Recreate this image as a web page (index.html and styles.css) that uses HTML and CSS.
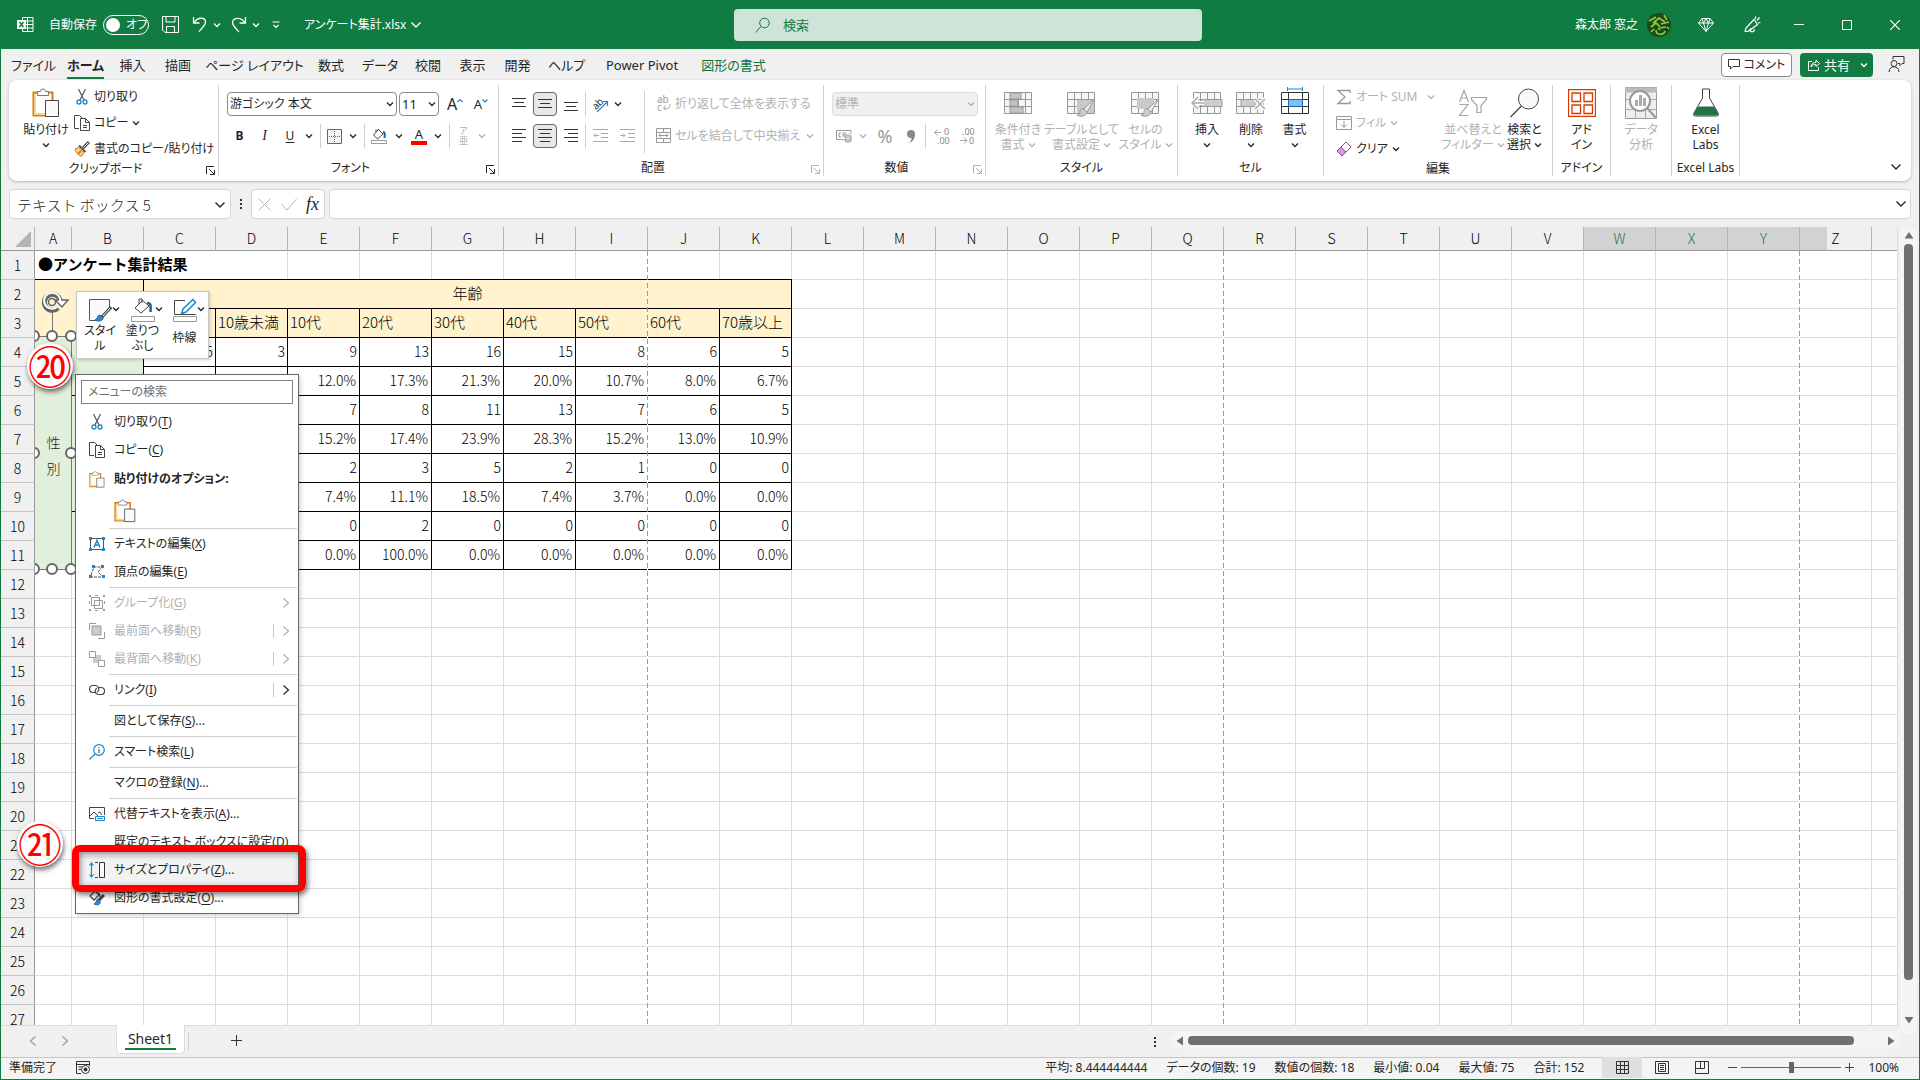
FILE: index.html
```html
<!DOCTYPE html>
<html lang="ja">
<head>
<meta charset="utf-8">
<title>アンケート集計.xlsx</title>
<link rel="stylesheet" href="styles.css">
</head>
<body>
<svg class="defs" aria-hidden="true">
  <symbol id="chev" viewBox="0 0 8 8"><path d="M1 2.5 4 5.5 7 2.5" fill="none" stroke="currentColor" stroke-width="1.3"/></symbol>
  <symbol id="chev-l" viewBox="0 0 12 12"><path d="M1.500 3.500 6 8 10.500 3.500" fill="none" stroke="currentColor" stroke-width="1.4"/></symbol>
  <symbol id="right" viewBox="0 0 8 12"><path d="M1.500 1.500 6.500 6 1.500 10.500" fill="none" stroke="currentColor" stroke-width="1.2"/></symbol>
  <symbol id="launch" viewBox="0 0 9 9"><path d="M.5 8V.5H8M3 3l5 5M8.500 4v4.500H4" fill="none" stroke="currentColor"/></symbol>
  <symbol id="cut" viewBox="0 0 16 16"><path d="M4.500 0 10 11M11.500 0 6 11" fill="none" stroke="#555" stroke-width="1.2"/><circle cx="5" cy="13" r="2" fill="none" stroke="#1b87cd" stroke-width="1.300"/><circle cx="11" cy="13" r="2" fill="none" stroke="#1b87cd" stroke-width="1.300"/></symbol>
  <symbol id="copy" viewBox="0 0 16 16"><path d="M5 13.500H.5V.5h5L8 3M6.500 3.500h5l4 4v8h-9zM11.500 3.500v4h4M9 10.500h4M9 12.500h4" fill="none" stroke="#444"/></symbol>
  <symbol id="paste" viewBox="0 0 28 30"><path d="M1.500 4.500h19V27.500h-19z" fill="#fff" stroke="#e07a10" stroke-width="2"/><path d="M3 6v20h10" fill="none" stroke="#f8d48a" stroke-width="2"/><path d="M5.500 7.500v-4h3a2.500 2.500 0 0 1 5 0h3v4z" fill="#fff" stroke="#777"/><path d="M13.500 12.500h13v16h-13z" fill="#fafafa" stroke="#444"/></symbol>
  <symbol id="sheetgrid" viewBox="0 0 28 22"><path d="M.5.5h27v21H.5z" fill="#f7f7f7" stroke="currentColor"/><path d="M0 7.500h28M0 14.500h28M7.500 0v22M14.500 0v22M21.500 0v22" fill="none" stroke="currentColor"/></symbol>
  <symbol id="brush" viewBox="0 0 20 20"><path d="M19 1 8 12l3 3z" fill="#eee" stroke="currentColor"/><path d="M8 12c-3-1-4 1-4 3s-1 3-3 3c3 2 9 2 10-3z" fill="#ccc" stroke="currentColor"/></symbol>
</svg>
<div class="app">

<header class="titlebar">
  <div class="title-left">
    <svg class="excel" width="17" height="17" viewBox="0 0 17 17"><path d="M5.500 1.500h10.500v14H5.500zM5 5h11M5 8.500h11M5 12h11M10.500 1.500v14" fill="none" stroke="#fff"/><path d="M0 4h9v9H0z" fill="#fff"/><path d="m2.500 6 4 5m0-5-4 5" stroke="#107c41" stroke-width="1.500"/></svg>
    <span>自動保存</span>
    <button class="toggle" aria-label="自動保存"><i></i>オフ</button>
    <button class="save" aria-label="保存"><svg width="17" height="17" viewBox="0 0 17 17"><path d="M.5.5h16v16H3l-2.500-2.500zM4 .5v5.500h9V.5M4.500 16.500v-6h8v6" fill="none" stroke="#fff"/></svg></button>
    <button aria-label="元に戻す"><svg width="16" height="17" viewBox="0 0 16 17"><path d="M1.500 1v6h6M2 6.500C6 1 13 1 13.500 5.500c.5 3-3 6-6.500 10" fill="none" stroke="#fff" stroke-width="1.300"/></svg></button>
    <button class="tchev" aria-label="元に戻す一覧"><svg width="8" height="8"><use href="#chev"/></svg></button>
    <button aria-label="やり直し"><svg width="16" height="17" viewBox="0 0 16 17"><path d="M14.500 1v6h-6M14 6.500C10 1 3 1 1.500 6c-.5 3 3 6 6.500 10" fill="none" stroke="#fff" stroke-width="1.300"/></svg></button>
    <button class="tchev" aria-label="やり直し一覧"><svg width="8" height="8"><use href="#chev"/></svg></button>
    <button class="custom" aria-label="クイック アクセス"><svg width="8" height="8" viewBox="0 0 8 8"><path d="M.5 1h7M1.500 4 4 6.500 6.500 4" fill="none" stroke="#fff" stroke-width="1.200"/></svg></button>
    <button class="filename">アンケート集計.xlsx <svg width="12" height="12"><use href="#chev-l"/></svg></button>
  </div>
  <label class="search"><svg width="16" height="16" viewBox="0 0 16 16"><circle cx="9.500" cy="6" r="4.800" fill="none" stroke="#107c41"/><path d="m6 9.500-5.500 6" stroke="#107c41"/></svg><input type="text" placeholder="検索" aria-label="検索"></label>
  <div class="title-right">
    <span>森太郎 窓之</span>
    <svg class="avatar" width="24" height="24" viewBox="0 0 24 24"><circle cx="12" cy="12" r="12" fill="#1c4a17"/><path d="M2 8 9 4M6 10l6-5 6 4M17 2l3 5M4 14l5-4 4 4M14 11l8-2M13 15l6-1M4 19l3-3M9 17c0 6 8 5 9 1M11 15l2 2M20 14l2 2" stroke="#8ccb3c" stroke-width="1.700" fill="none"/></svg>
    <button aria-label="プレミアム"><svg width="16" height="16" viewBox="0 0 16 16"><path d="M4 1.500h8l3.500 4.500L8 14.500.5 6zM.5 6h15M4 1.500 5.500 6 8 14.500 10.500 6 12 1.500M5.500 6 8 1.500 10.500 6" fill="none" stroke="#fff"/></svg></button>
    <button aria-label="新機能"><svg width="17" height="17" viewBox="0 0 17 17"><path d="M10 3.500 2 12l-.8 3.500L4 15.500 13.500 8.500zM7 12.500l-3 3M6 14c1 3 5 2 4-1M11 3l1-2.500M13 4.500l2.500-3M14 7l2.500-.5" fill="none" stroke="#fff" stroke-width="1.200"/></svg></button>
    <button aria-label="最小化"><svg width="10" height="10"><path d="M0 4.500h10" stroke="#fff"/></svg></button>
    <button aria-label="最大化"><svg width="10" height="10"><path d="M.5.5h9v9h-9z" fill="none" stroke="#fff"/></svg></button>
    <button aria-label="閉じる"><svg width="10" height="10"><path d="m0 0 10 10M10 0 0 10" stroke="#fff" stroke-width="1.200"/></svg></button>
  </div>
</header>

<div class="tabrow">
  <nav class="tabs">
    <a href="#">ファイル</a><a href="#" class="active">ホーム</a><a href="#">挿入</a><a href="#">描画</a><a href="#">ページ レイアウト</a><a href="#">数式</a><a href="#">データ</a><a href="#">校閲</a><a href="#">表示</a><a href="#">開発</a><a href="#">ヘルプ</a><a href="#">Power Pivot</a><a href="#" class="context">図形の書式</a>
  </nav>
  <button class="comment"><svg width="12" height="11" viewBox="0 0 12 11"><path d="M.5.5h11v7H5l-2.500 2.500V7.500h-2z" fill="none" stroke="#333"/></svg>コメント</button>
  <button class="share"><svg width="12" height="12" viewBox="0 0 12 12"><path d="M4 2.500H.5v9h10V8M3 8c0-3 2-4.500 5-4.500V1l3.500 3.500L8 7.500V5.500C5.500 5.500 4 6 3 8z" fill="none" stroke="#fff"/></svg>共有<svg class="end" width="8" height="8"><use href="#chev"/></svg></button>
  <button class="feedback" aria-label="フィードバック"><svg width="17" height="17" viewBox="0 0 17 17"><path d="M5 3.500V.5h11v7h-2l-2 2v-2h-2M1 16c0-7 10-7 10 0" fill="none" stroke="#333"/><circle cx="6" cy="7.500" r="3" fill="none" stroke="#333"/></svg></button>
</div>

<section class="ribbon">
  <div class="group g-clip">
    <div class="body">
      <button class="big w56"><span class="ico"><svg width="28" height="30"><use href="#paste"/></svg></span><span>貼り付け</span><svg width="8" height="8"><use href="#chev"/></svg></button>
      <div class="list">
        <button><svg width="16" height="16"><use href="#cut"/></svg>切り取り</button>
        <button><svg width="16" height="16"><use href="#copy"/></svg>コピー<svg width="8" height="8"><use href="#chev"/></svg></button>
        <button><svg width="16" height="16" viewBox="0 0 16 16"><path d="M15 1 9 7" stroke="#444" stroke-width="3"/><path d="M14.500 1.500 9.500 6.500" stroke="#fff"/><path d="M5 4.500 11.500 11" stroke="#555" stroke-width="2"/><path d="M4.500 6.500 1 8c1 4 3 6 6.500 7.500l2.500-4z" fill="#f8d48a" stroke="#e07a10"/><path d="M4 13 7 10" stroke="#e07a10" stroke-width="2"/></svg>書式のコピー/貼り付け</button>
      </div>
    </div>
    <div class="foot">クリップボード<svg width="9" height="9"><use href="#launch"/></svg></div>
  </div>

  <div class="group g-font">
    <div class="body rows">
      <div class="row">
        <div class="combo font"><input type="text" value="游ゴシック 本文" aria-label="フォント"><svg width="8" height="8"><use href="#chev"/></svg></div>
        <div class="combo size"><input type="text" value="11" aria-label="サイズ"><svg width="8" height="8"><use href="#chev"/></svg></div>
        <button class="ctl w28 grow" aria-label="拡大">A<svg width="6" height="6" viewBox="0 0 6 6"><path d="M.5 4 3 1.500 5.500 4" fill="none" stroke="#1b87cd" stroke-width="1.200"/></svg></button>
        <button class="ctl w24 shrink" aria-label="縮小">A<svg width="6" height="6" viewBox="0 0 6 6"><path d="M.5 1.500 3 4 5.500 1.500" fill="none" stroke="#1b87cd" stroke-width="1.200"/></svg></button>
      </div>
      <div class="row fmt">
        <button class="bold">B</button><button class="ital">I</button><button class="under">U</button><svg width="8" height="8"><use href="#chev"/></svg><i class="vs"></i>
        <button aria-label="罫線"><svg width="15" height="15" viewBox="0 0 15 15"><path d="M.5.500h14v14H.5z" fill="#f4f4f4" stroke="#666"/><path d="M7.500 2v11M2 7.500h11" stroke="#666" stroke-dasharray="1 1"/></svg></button><svg width="8" height="8"><use href="#chev"/></svg><i class="vs"></i>
        <button aria-label="塗りつぶし"><svg width="16" height="16" viewBox="0 0 16 16"><path d="M7 2 2.500 7l4 4L12 6 7 1zM5 4V1.500" fill="#fff" stroke="#444"/><path d="M12 4c2 0 2 2 1.500 6" stroke="#1b62a8" stroke-width="2" fill="none"/><path d="M.5 12.500h15v3H.5z" fill="#fff" stroke="#999"/></svg></button><svg width="8" height="8"><use href="#chev"/></svg>
        <button class="fcolor">A</button><svg width="8" height="8"><use href="#chev"/></svg><i class="vs"></i>
        <button class="ruby dis">ア<br>亜</button><svg class="dis" width="8" height="8"><use href="#chev"/></svg>
      </div>
    </div>
    <div class="foot">フォント<svg width="9" height="9"><use href="#launch"/></svg></div>
  </div>

  <div class="group g-align">
    <div class="body">
      <div class="rows">
        <div class="row al">
          <button aria-label="上揃え"><svg width="14" height="14"><path d="M0 1.500h14M2 5.500h10M0 9.500h14" stroke="#333"/></svg></button>
          <button class="on" aria-label="上下中央揃え"><svg width="14" height="14"><path d="M0 2.500h14M2 6.500h10M0 10.500h14" stroke="#333"/></svg></button>
          <button aria-label="下揃え"><svg width="14" height="14"><path d="M0 5.500h14M2 9.500h10M0 13.500h14" stroke="#333"/></svg></button><i class="vs"></i>
          <button aria-label="方向"><svg width="17" height="17" viewBox="0 0 17 17"><text x="0" y="11" transform="rotate(-45 6 8)" font-size="10" fill="#333">ab</text><path d="M5 16 15.500 5.500M11 5.500h4.500V10" fill="none" stroke="#1b87cd" stroke-width="1.200"/></svg></button>
          <svg width="8" height="8"><use href="#chev"/></svg>
        </div>
        <div class="row al">
          <button aria-label="左揃え"><svg width="14" height="14"><path d="M0 .5h14M0 4.500h10M0 8.500h14M0 12.500h10" stroke="#333"/></svg></button>
          <button class="on" aria-label="中央揃え"><svg width="14" height="14"><path d="M0 .5h14M2 4.500h10M0 8.500h14M2 12.500h10" stroke="#333"/></svg></button>
          <button aria-label="右揃え"><svg width="14" height="14"><path d="M0 .5h14M4 4.500h10M0 8.500h14M4 12.500h10" stroke="#333"/></svg></button><i class="vs"></i>
          <button class="dis" aria-label="インデント減"><svg width="15" height="14"><path d="M0 .5h15M8 4.500h7M8 8.500h7M0 12.500h15M1 6.500h5M3 4.500l-2 2 2 2" fill="none" stroke="#aaa"/></svg></button>
          <button class="dis" aria-label="インデント増"><svg width="15" height="14"><path d="M0 .5h15M8 4.500h7M8 8.500h7M0 12.500h15M0 6.500h5M3 4.500l2 2-2 2" fill="none" stroke="#aaa"/></svg></button>
        </div>
      </div>
      <i class="vs tall"></i>
      <div class="rows wrapcol">
        <button class="row dis"><svg width="16" height="16" viewBox="0 0 16 16"><text x="1" y="7" font-size="10" fill="#999">ab</text><text x="1" y="15" font-size="10" fill="#999">c</text><path d="M13.500 8c2 5-3 5-5.500 4M10 9.500 7.500 12 10 14.500" fill="none" stroke="#a5a5a5"/></svg>折り返して全体を表示する</button>
        <button class="row dis"><svg width="16" height="16" viewBox="0 0 16 16"><path d="M.5.5h14v14H.5zM0 4.500h15M0 10.500h15M7.500 0v4M7.500 11v4M3 7.500h9M5 5.500l-2 2 2 2M10 5.500l2 2-2 2" fill="none" stroke="#999"/></svg>セルを結合して中央揃え<svg width="8" height="8"><use href="#chev"/></svg></button>
      </div>
    </div>
    <div class="foot">配置<svg class="dis" width="9" height="9"><use href="#launch"/></svg></div>
  </div>

  <div class="group g-num">
    <div class="body rows">
      <div class="row"><div class="combo off"><input type="text" value="標準" aria-label="表示形式" disabled><svg width="8" height="8"><use href="#chev"/></svg></div></div>
      <div class="row num dis">
        <button aria-label="通貨"><svg width="16" height="14" viewBox="0 0 16 14"><path d="M15 5V1.500H.5v9h7M5 4H3v4h2M7 8V4h3M7 6h3" fill="none" stroke="#999"/><path d="M9 7v5c0 1.500 6 1.500 6 0V7c0 1.500-6 1.500-6 0 0-1.500 6-1.500 6 0M9 10c0 1.500 6 1.500 6 0" fill="#e8e8e8" stroke="#999"/></svg></button><svg width="8" height="8"><use href="#chev"/></svg>
        <button class="pct">%</button>
        <button aria-label="桁区切り"><svg width="8" height="13" viewBox="0 0 8 13"><path d="M0 4a4 4 0 0 1 8 0c0 4-2 8-6 9 2-2 2.500-3 2.500-5C2 8.500 0 7 0 4z" fill="#888"/></svg></button><i class="vs"></i>
        <button aria-label="小数点以下を増やす"><svg width="16" height="16" viewBox="0 0 16 16"><path d="M7 4.500H.5M3.500 1.500l-3 3 3 3" fill="none" stroke="#a5a5a5"/><text x="10" y="7" font-size="9" fill="#888">0</text><text x="3" y="16" font-size="9" fill="#888">.00</text></svg></button>
        <button aria-label="小数点以下を減らす"><svg width="16" height="16" viewBox="0 0 16 16"><text x="3" y="7" font-size="9" fill="#888">.00</text><text x="10" y="16" font-size="9" fill="#888">0</text><path d="M1 12.500h7M5 9.500l3 3-3 3" fill="none" stroke="#a5a5a5"/></svg></button>
      </div>
    </div>
    <div class="foot">数値<svg class="dis" width="9" height="9"><use href="#launch"/></svg></div>
  </div>

  <div class="group g-style">
    <div class="body">
      <button class="big dis"><span class="ico"><svg width="28" height="22"><use href="#sheetgrid"/><path d="M6 1h11v6H6zM6 8h8v6H6zM6 15h13v6H6z" fill="#c4c4c4" stroke="#999"/></svg></span><span>条件付き<br>書式 <svg width="8" height="8"><use href="#chev"/></svg></span></button>
      <button class="big dis"><span class="ico"><svg width="30" height="28" viewBox="0 -3 30 28"><use href="#sheetgrid" width="28" height="22"/><path d="M10 8h17v13H10z" fill="#c9c9c9"/><use href="#brush" x="9" y="5" width="20" height="20"/></svg></span><span>テーブルとして<br>書式設定 <svg width="8" height="8"><use href="#chev"/></svg></span></button>
      <button class="big dis"><span class="ico"><svg width="30" height="28" viewBox="0 -3 30 28"><use href="#sheetgrid" width="28" height="22"/><path d="M6 6h17v11H6z" fill="#c9c9c9"/><use href="#brush" x="9" y="5" width="20" height="20"/></svg></span><span>セルの<br>スタイル <svg width="8" height="8"><use href="#chev"/></svg></span></button>
    </div>
    <div class="foot">スタイル</div>
  </div>

  <div class="group g-cell">
    <div class="body">
      <button class="big"><span class="ico faint"><svg width="32" height="22"><use href="#sheetgrid" x="2" width="28" height="22"/><path d="M10 7.500h21v7H10z" fill="#ccc" stroke="#999"/><path d="M13 11H1.500M7 5l-6 6 6 6" fill="none" stroke="#fff" stroke-width="4"/><path d="M13 11H1.500M7 5l-6 6 6 6" fill="none" stroke="#aaa" stroke-width="1.500"/></svg></span><span>挿入</span><svg width="8" height="8"><use href="#chev"/></svg></button>
      <button class="big"><span class="ico faint"><svg width="30" height="22"><use href="#sheetgrid" width="28" height="22"/><path d="M5 7.500h14v7H5z" fill="#ccc" stroke="#999"/><path d="m19 7 10 10M29 7 19 17" stroke="#fff" stroke-width="4"/><path d="m19 7 10 10M29 7 19 17" stroke="#aaa" stroke-width="1.500"/></svg></span><span>削除</span><svg width="8" height="8"><use href="#chev"/></svg></button>
      <button class="big"><span class="ico"><svg width="28" height="32" viewBox="0 -4 28 32"><path d="M6.500-4v4M21.500-4v4M6.500-2h15" stroke="#1b87cd"/><path d="M.5 1.500h27v21H.5zM0 8.500h28M0 15.500h28M7.500 1v22M21.500 1v22" fill="#fff" stroke="#333"/><path d="M7.500 8.500h14v7h-14z" fill="#83beec" stroke="#1268b3"/></svg></span><span>書式</span><svg width="8" height="8"><use href="#chev"/></svg></button>
    </div>
    <div class="foot">セル</div>
  </div>

  <div class="group g-edit">
    <div class="body">
      <div class="list">
        <button class="dis"><svg width="16" height="16" viewBox="0 0 16 16"><path d="M14 4V1.500H2L9 8l-7 6.500h12V12" fill="none" stroke="#999" stroke-width="1.300"/></svg>オート SUM<svg class="gap" width="8" height="8"><use href="#chev"/></svg></button>
        <button class="dis"><svg width="16" height="16" viewBox="0 0 16 16"><path d="M.5 1.500h15v13H.5zM0 4.500h16M8 6v6M5 9.500l3 3 3-3" fill="none" stroke="#999"/></svg>フィル<svg width="8" height="8"><use href="#chev"/></svg></button>
        <button><svg width="16" height="16" viewBox="0 0 16 16"><path d="m10 1 5 5-9 9-5-5z" fill="#fff" stroke="#9c3fa8"/><path d="m5 6 5 5-4 4-5-5z" fill="#d79ae0" stroke="#9c3fa8"/></svg>クリア<svg width="8" height="8"><use href="#chev"/></svg></button>
      </div>
      <button class="big dis"><span class="ico"><svg width="30" height="28" viewBox="0 0 30 28"><path d="M1.500 13 6 1.500 10.500 13M3 9h6M1.500 15.500h8.500l-8.500 11h9M13.500 8.500h15v2l-5.500 6v7h-4v-7l-5.500-6z" fill="none" stroke="#a5a5a5" stroke-width="1.200"/></svg></span><span>並べ替えと<br>フィルター <svg width="8" height="8"><use href="#chev"/></svg></span></button>
      <button class="big"><span class="ico"><svg width="30" height="30" viewBox="0 0 30 30"><circle cx="18.500" cy="11" r="10" fill="#fafafa" stroke="#444"/><path d="M11.500 18 .5 29" stroke="#444" stroke-width="1.200"/></svg></span><span>検索と<br>選択 <svg width="8" height="8"><use href="#chev"/></svg></span></button>
    </div>
    <div class="foot">編集</div>
  </div>

  <div class="group g-addin">
    <div class="body"><button class="big"><span class="ico"><svg width="28" height="28"><path d="M.5.5h27v27H.5zM4 4h8.500v8.500H4zM16 4h8.500v8.500H16zM4 16h8.500v8.500H4zM16 16h8.500v8.500H16z" fill="none" stroke="#d83b01" stroke-width="1.300"/></svg></span><span>アド<br>イン</span></button></div>
    <div class="foot">アドイン</div>
  </div>
  <div class="group g-data">
    <div class="body"><button class="big dis"><span class="ico"><svg width="32" height="32" viewBox="0 0 32 32"><path d="M.5.500h31v31H.5z" fill="#eee" stroke="#999"/><path d="M0 3h32" stroke="#bbb" stroke-width="5"/><path d="M0 12.500h32M0 22.500h32M10.500 5v27M20.500 5v27" stroke="#aaa"/><circle cx="15" cy="14" r="10" fill="#fff" stroke="#999" stroke-width="2"/><path d="m22 21 9 10" stroke="#999" stroke-width="2"/><path d="M10 13h3v6h-3zM14 8h3v11h-3zM18 11h3v8h-3z" fill="#aaa"/></svg></span><span>データ<br>分析</span></button></div>
    <div class="foot"></div>
  </div>
  <div class="group g-labs">
    <div class="body"><button class="big"><span class="ico"><svg width="26" height="30" viewBox="0 0 26 30"><path d="M9.500 1h7v9l8 14c2 3 1 4-1 4H2.500c-2 0-3-1-1-4l8-14z" fill="#fff" stroke="#444"/><path d="M5 18.500h16l3.500 6c1 2 1 3-1 3H2.500c-2 0-2-1-1-3z" fill="#217346"/></svg></span><span>Excel<br>Labs</span></button></div>
    <div class="foot">Excel Labs</div>
  </div>
  <button class="collapse" aria-label="リボンを折りたたむ"><svg width="12" height="12"><use href="#chev-l"/></svg></button>
</section>

<div class="formulabar">
  <div class="namebox"><input type="text" value="テキスト ボックス 5" aria-label="名前ボックス"><svg width="12" height="12"><use href="#chev-l"/></svg></div>
  <span class="dots"><i></i><i></i><i></i></span>
  <div class="fxbox">
    <svg width="13" height="13"><path d="m.5.500 12 12M12.500.5l-12 12" stroke="#b5b5b5"/></svg>
    <svg width="16" height="13"><path d="M.5 6.500 6 12 15.500 1" fill="none" stroke="#b5b5b5"/></svg>
    <button class="fx">fx</button>
  </div>
  <div class="formula"><input type="text" aria-label="数式バー"><svg width="12" height="12"><use href="#chev-l"/></svg></div>
</div>

<main class="workspace">
  <div class="pane">
    <table class="sheet">
      <colgroup><col class="c-row"><col class="c-a"><col span="26"></colgroup>
      <thead><tr><th class="corner"><svg width="16" height="16"><path d="M16 0v16H0z" fill="#b4b4b4"/></svg></th><th>A</th><th>B</th><th>C</th><th>D</th><th>E</th><th>F</th><th>G</th><th>H</th><th>I</th><th>J</th><th>K</th><th>L</th><th>M</th><th>N</th><th>O</th><th>P</th><th>Q</th><th>R</th><th>S</th><th>T</th><th>U</th><th>V</th><th class="sel">W</th><th class="sel">X</th><th class="sel">Y</th><th class="part">Z</th><th></th></tr></thead>
      <tbody>
        <tr><th>1</th><td colspan="3" class="title">●アンケート集計結果</td><td colspan="24"></td></tr>
        <tr class="d top"><th>2</th><td colspan="2" rowspan="2" class="y"></td><td colspan="9" class="y mid">年齢</td></tr>
        <tr class="d h"><th>3</th><td></td><td>10歳未満</td><td>10代</td><td>20代</td><td>30代</td><td>40代</td><td class="pb">50代</td><td>60代</td><td>70歳以上</td></tr>
        <tr class="d"><th>4</th><td class="g a" rowspan="8"></td><td class="g" rowspan="2"></td><td>75</td><td>3</td><td>9</td><td>13</td><td>16</td><td>15</td><td class="pb">8</td><td>6</td><td>5</td></tr>
        <tr class="d p"><th>5</th><td></td><td></td><td>12.0%</td><td>17.3%</td><td>21.3%</td><td>20.0%</td><td class="pb">10.7%</td><td>8.0%</td><td>6.7%</td></tr>
        <tr class="d"><th>6</th><td class="g" rowspan="2"></td><td></td><td></td><td>7</td><td>8</td><td>11</td><td>13</td><td class="pb">7</td><td>6</td><td>5</td></tr>
        <tr class="d p"><th>7</th><td></td><td></td><td>15.2%</td><td>17.4%</td><td>23.9%</td><td>28.3%</td><td class="pb">15.2%</td><td>13.0%</td><td>10.9%</td></tr>
        <tr class="d"><th>8</th><td class="g" rowspan="2"></td><td></td><td></td><td>2</td><td>3</td><td>5</td><td>2</td><td class="pb">1</td><td>0</td><td>0</td></tr>
        <tr class="d p"><th>9</th><td></td><td></td><td>7.4%</td><td>11.1%</td><td>18.5%</td><td>7.4%</td><td class="pb">3.7%</td><td>0.0%</td><td>0.0%</td></tr>
        <tr class="d"><th>10</th><td class="g" rowspan="2"></td><td></td><td></td><td>0</td><td>2</td><td>0</td><td>0</td><td class="pb">0</td><td>0</td><td>0</td></tr>
        <tr class="d p"><th>11</th><td></td><td></td><td>0.0%</td><td>100.0%</td><td>0.0%</td><td>0.0%</td><td class="pb">0.0%</td><td>0.0%</td><td>0.0%</td></tr>
        <tr><th>12</th></tr><tr><th>13</th></tr><tr><th>14</th></tr><tr><th>15</th></tr><tr><th>16</th></tr><tr><th>17</th></tr><tr><th>18</th></tr><tr><th>19</th></tr><tr><th>20</th></tr><tr><th>21</th></tr><tr><th>22</th></tr><tr><th>23</th></tr><tr><th>24</th></tr><tr><th>25</th></tr><tr><th>26</th></tr><tr><th>27</th></tr>
      </tbody>
    </table>
    <i class="pagebreak pb1"></i><i class="pagebreak pb2"></i><i class="pagebreak pb3"></i>

    <div class="textbox">性<br>別</div>
    <svg class="handles" width="44" height="290" viewBox="0 0 44 290">
      <path d="M0 47.500h36.500v233H0M17.500 22v25" fill="none" stroke="#777"/>
      <g fill="#fff" stroke="#666" stroke-width="2"><circle cx="-1" cy="47" r="5"/><circle cx="17" cy="47" r="5"/><circle cx="36" cy="47" r="5"/><circle cx="-1" cy="164" r="5"/><circle cx="36" cy="164" r="5"/><circle cx="-1" cy="280" r="5"/><circle cx="17" cy="280" r="5"/><circle cx="36" cy="280" r="5"/></g>
      <path d="M23 19A8 8 0 1 1 25 11" fill="none" stroke="#666" stroke-width="5"/><path d="m20 11 13 0-6 7z" fill="#fff" stroke="#666" stroke-width="1.500"/><path d="M22 18A8 8 0 1 1 25 13" fill="none" stroke="#fff" stroke-width="2"/><circle cx="17" cy="13" r="3.500" fill="none" stroke="#666" stroke-width="1.500"/>
    </svg>

    <div class="minibar">
      <button><span><svg width="24" height="24" viewBox="0 0 24 24"><path d="M21.500 9V1.500h-20v21H10" fill="#fafafa" stroke="#555"/><path d="m23 9-9 10" stroke="#444" stroke-width="3"/><path d="m22 10-7 8" stroke="#fff"/><path d="M12 17c-3 0-2 4-5 5 4 2 8 1 8-2z" fill="#2e86d1" stroke="#1b62a8"/></svg><svg width="8" height="8"><use href="#chev"/></svg></span>スタイ<br>ル</button>
      <button><span><svg width="24" height="24" viewBox="0 0 24 24"><path d="M11 3 4 10l6 5 8-7-7-6zM8 6V1h3v4" fill="#fff" stroke="#444"/><path d="M16 5c4 0 4 2 3.500 9" stroke="#1b62a8" stroke-width="2.500" fill="none"/><path d="M.5 18.500h23v5H.5z" fill="#fff" stroke="#999"/></svg><svg width="8" height="8"><use href="#chev"/></svg></span>塗りつ<br>ぶし</button>
      <button><span><svg width="24" height="24" viewBox="0 0 24 24"><path d="M12 2.500H1.500v14H23" fill="none" stroke="#444"/><path d="M20 1.500 10 11l-1.500 4.500L13 14l9.500-9.500z" fill="#fff" stroke="#1b87cd" stroke-width="1.500"/><path d="M.5 18.500h23v5H.5z" fill="#fff" stroke="#999"/></svg><svg width="8" height="8"><use href="#chev"/></svg></span><em>枠線</em></button>
    </div>

    <div class="menu">
      <input class="menusearch" type="text" placeholder="メニューの検索" aria-label="メニューの検索">
      <button><svg width="16" height="16"><use href="#cut"/></svg><span>切り取り(<u>T</u>)</span></button>
      <button><svg width="16" height="16"><use href="#copy"/></svg><span>コピー(<u>C</u>)</span></button>
      <div class="heading"><svg width="16" height="17"><use href="#paste"/></svg><span>貼り付けのオプション:</span></div>
      <button class="pasteopt" aria-label="貼り付け"><i></i><svg width="22" height="24"><use href="#paste"/></svg></button>
      <hr>
      <button><svg width="16" height="14" viewBox="0 0 16 14"><path d="M1.500 1.500h13v11h-13z" fill="none" stroke="#555"/><path d="M0 0h3v3H0zM13 0h3v3h-3zM0 11h3v3H0zM13 11h3v3h-3z" fill="#1b87cd"/><path d="m5 10.500 3-7 3 7M6 8h4" fill="none" stroke="#1b87cd" stroke-width="1.500"/></svg><span>テキストの編集(<u>X</u>)</span></button>
      <button><svg width="16" height="14" viewBox="0 0 16 14"><path d="M2 10 5 2h8l-4 5 5 5H2" fill="none" stroke="#555" stroke-dasharray="3 1"/><path d="M3 0h3v3H3zM12 0h3v3h-3zM0 10h3v3H0zM13 10h3v3h-3z" fill="#1b87cd"/></svg><span>頂点の編集(<u>E</u>)</span></button>
      <hr>
      <button class="dis"><svg width="16" height="16" viewBox="0 0 16 16"><path d="M2.500 2.500h8v8h-8zM5.500 5.500h8v8h-8z" fill="none" stroke="#999"/><path d="M0 0h2v2H0zM14 0h2v2h-2zM0 14h2v2H0zM14 14h2v2h-2zM6 0h3v1H6zM6 15h3v1H6zM0 6h1v3H0zM15 6h1v3h-1z" fill="#999"/></svg><span>グループ化(<u>G</u>)</span><svg class="arr" width="8" height="12"><use href="#right"/></svg></button>
      <button class="dis"><svg width="16" height="16" viewBox="0 0 16 16"><path d="M3 3h9v9H3z" fill="#ccc" stroke="#999"/><path d="M.5 7V.5H7M9 15.500h6.500V9" fill="none" stroke="#999"/></svg><span>最前面へ移動(<u>R</u>)</span><i class="split"></i><svg class="arr" width="8" height="12"><use href="#right"/></svg></button>
      <button class="dis"><svg width="16" height="16" viewBox="0 0 16 16"><path d="M4 4h8v8H4z" fill="#ccc"/><path d="M.5.5h6v6h-6zM9.500 9.500h6v6h-6z" fill="#fff" stroke="#999"/></svg><span>最背面へ移動(<u>K</u>)</span><i class="split"></i><svg class="arr" width="8" height="12"><use href="#right"/></svg></button>
      <hr>
      <button><svg width="16" height="12" viewBox="0 0 16 12"><path d="M6 8.500H4a3.500 3.500 0 0 1 0-7h3a3.500 3.500 0 0 1 1 6.500M10 3.500h2a3.500 3.500 0 0 1 0 7H9a3.500 3.500 0 0 1-1-6.500" fill="none" stroke="#444" stroke-width="1.200"/></svg><span>リンク(<u>I</u>)</span><i class="split"></i><svg class="arr" width="8" height="12"><use href="#right"/></svg></button>
      <hr>
      <button><i></i><span>図として保存(<u>S</u>)...</span></button>
      <hr>
      <button><svg width="16" height="16" viewBox="0 0 16 16"><circle cx="10" cy="6" r="5.300" fill="none" stroke="#1b87cd" stroke-width="1.200"/><path d="M6 10 .5 15.500" stroke="#1b87cd" stroke-width="1.300"/><path d="M10 3v1M10 5v4" stroke="#333"/></svg><span>スマート検索(<u>L</u>)</span></button>
      <hr>
      <button><i></i><span>マクロの登録(<u>N</u>)...</span></button>
      <hr>
      <button><svg width="16" height="15" viewBox="0 0 16 15"><path d="M5 11.500H.5V.5h15V8M1 9l4-4 4 4M9 6l2-1 2 3" fill="none" stroke="#444"/><path d="M6.500 9.500h9v4h-9z" fill="#fff" stroke="#1b87cd"/><path d="M8 11.500h6" stroke="#1b87cd"/></svg><span>代替テキストを表示(<u>A</u>)...</span></button>
      <button><i></i><span>既定のテキスト ボックスに設定(<u>D</u>)</span></button>
      <button class="hover"><svg width="16" height="16" viewBox="0 0 16 16"><path d="M2.500 1v14M.5 3.500l2-2.500 2 2.500M.5 12.500l2 2.500 2-2.500" fill="none" stroke="#1b87cd" stroke-width="1.200"/><path d="M6 .5h3M6 15.500h3" stroke="#444"/><path d="M10.500.5h5v15h-5z" fill="#fafafa" stroke="#333"/></svg><span>サイズとプロパティ(<u>Z</u>)...</span></button>
      <button><svg width="16" height="16" viewBox="0 0 16 16"><path d="M6 1 1 6l4 4 5-5zM8 3c2 0 3 1 3 4" fill="none" stroke="#444" stroke-width="1.300"/><path d="m15 5-5 5" stroke="#444" stroke-width="3"/><path d="M9 9c-2 0-1 4-4 5 4 2 7 0 6-3z" fill="#2e86d1" stroke="#1b62a8"/></svg><span>図形の書式設定(<u>O</u>)...</span></button>
    </div>
    <div class="mark-box"></div>
    <div class="mark n20">⑳</div>
    <div class="mark n21">㉑</div>
  </div>
  <div class="vscroll"><svg width="10" height="8"><path d="M5 1 9.500 7.500h-9z" fill="#707070"/></svg><i></i><b></b><svg width="10" height="8"><path d="M5 7.500.5 1h9z" fill="#707070"/></svg></div>
</main>

<div class="sheetbar">
  <button class="prev" aria-label="前"><svg width="8" height="12" viewBox="0 0 8 12"><path d="M6.500 1.500 1.500 6l5 4.500" fill="none" stroke="#999" stroke-width="1.200"/></svg></button>
  <button class="next" aria-label="次"><svg width="8" height="12"><use href="#right"/></svg></button>
  <a class="sheettab" href="#"><span>Sheet1</span></a>
  <i class="vs"></i>
  <button class="add" aria-label="新しいシート"><svg width="11" height="11"><path d="M0 5.500h11M5.500 0v11" stroke="#333"/></svg></button>
  <span class="dots"><i></i><i></i><i></i></span>
  <div class="hscroll"><svg width="8" height="10"><path d="M.5 5 7 .5v9z" fill="#707070"/></svg><i></i><b></b><svg width="8" height="10"><path d="M7.500 5 1 .5v9z" fill="#707070"/></svg></div>
</div>

<footer class="status">
  <span>準備完了</span>
  <svg class="rec" width="15" height="14" viewBox="0 0 15 14"><path d="M5 12.500H.5V.5h13V5M0 3.500h14M2.500 6h4M2.500 8.500H5" fill="none" stroke="#333"/><circle cx="9.500" cy="8.500" r="4" fill="#fff" stroke="#333"/><circle cx="9.500" cy="8.500" r="2" fill="#333"/></svg>
  <div class="stats"><span>平均: 8.444444444</span><span>データの個数: 19</span><span>数値の個数: 18</span><span>最小値: 0.04</span><span>最大値: 75</span><span>合計: 152</span></div>
  <div class="views">
    <button class="on" aria-label="標準"><svg width="13" height="13"><path d="M.5.5h12v12H.5zM0 4.500h13M0 8.500h13M4.500 0v13M8.500 0v13" fill="none" stroke="#333"/></svg></button>
    <button aria-label="ページ レイアウト"><svg width="14" height="13"><path d="M.5.5h13v12H.5zM3.500 2.500h7v8h-7zM5 4.500h4M5 6.500h4M5 8.500h4" fill="none" stroke="#333"/></svg></button>
    <button aria-label="改ページ プレビュー"><svg width="14" height="13"><path d="M.5.500h13v12H.5zM5.500.5v7M.5 7.500h9M9.500.5v7" fill="none" stroke="#333"/></svg></button>
  </div>
  <div class="zoom"><button aria-label="縮小"><svg width="9" height="9"><path d="M0 4.500h9" stroke="#444"/></svg></button><input type="range" min="0" max="100" value="50" aria-label="ズーム"><button aria-label="拡大"><svg width="9" height="9"><path d="M0 4.500h9M4.500 0v9" stroke="#444"/></svg></button></div>
  <span class="pctval">100%</span>
</footer>
</div>
</body>
</html>
```
FILE: styles.css
```css
* { box-sizing: border-box; }
body { margin: 0; font: 12px/16px "Noto Sans", "Noto Sans CJK JP", sans-serif; font-feature-settings: "palt"; color: #262626; background: #f0f0f0; overflow: hidden; }
button, input { font: inherit; font-feature-settings: inherit; color: inherit; background: none; border: 0; padding: 0; margin: 0; white-space: nowrap; }
input { min-width: 0; outline: 0; }
a { color: inherit; text-decoration: none; }
svg { flex: none; }
svg text { font-family: "Noto Sans", sans-serif; }
.row svg { overflow: visible; }
.defs { display: none; }
.dis { color: #b1b1b1; }
.vs { width: 1px; height: 24px; background: #d0d0d0; flex: none; }
.app { height: 100vh; display: flex; flex-direction: column; border: solid #107c41; border-width: 0 1px 1px; }

/* title bar */
.titlebar { height: 49px; flex: none; background: #107c41; color: #fff; display: grid; grid-template-columns: 1fr 468px 1fr; align-items: center; padding-left: 16px; }
.title-left, .title-right { display: flex; align-items: center; white-space: nowrap; }
.title-left button, .title-right button { display: flex; align-items: center; }
.excel { margin-right: 15px; }
.toggle { width: 46px; height: 20px; margin: 0 13px 0 6px; border: 1px solid #fff !important; border-radius: 10px; padding-left: 2px; gap: 6px; }
.toggle i { width: 14px; height: 14px; border-radius: 7px; background: #fff; }
.save { margin-right: 13px; }
.tchev { margin: 0 10px 0 5px; }
.custom { margin: 0 24px 0 2px; }
.filename { gap: 4px; }
.search { height: 32px; border-radius: 4px; background: #cfe3d8; display: flex; align-items: center; padding-left: 21px; gap: 12px; color: #107c41; font-size: 13px; }
.search input { flex: 1; }
.search input::placeholder { color: #107c41; opacity: 1; }
.title-right { justify-content: flex-end; padding-right: 19px; }
.avatar { margin: 0 27px 0 9px; }
.title-right button { margin-right: 38px; }
.title-right button:nth-of-type(1) { margin-right: 30px; }
.title-right button:nth-of-type(2) { margin-right: 33px; }
.title-right button:last-child { margin-right: 0; }

/* tabs */
.tabrow { height: 31px; flex: none; display: flex; align-items: center; padding: 0 14px 0 5px; }
.tabs { flex: 1; display: grid; grid-template-columns: 55px 49px 45px 46px 107px 46px 52px 44px 45px 45px 53px 98px 85px; justify-items: center; font-size: 13px; line-height: 20px; white-space: nowrap; padding-top: 4px; }
.tabs a { height: 24px; }
.tabs .active { font-weight: 700; border-bottom: 2px solid #107c41; }
.tabs .context { color: #0f7038; }
.comment, .share { height: 24px; border-radius: 4px; display: flex; align-items: center; gap: 4px; }
.comment { width: 71px; border: 1px solid #8a8a8a; background: #fff; justify-content: center; margin-right: 8px; }
.share { width: 73px; background: #107c41; color: #fff; padding: 0 5px 0 8px; font-size: 13px; margin-right: 15px; }
.share .end { margin-left: auto; }
.feedback { display: flex; }

/* ribbon */
.ribbon { height: 101px; flex: none; margin: 0 8px; padding: 5px 0; background: #fff; border-radius: 8px; box-shadow: 0 1px 3px rgba(0,0,0,.25); display: flex; position: relative; }
.group { height: 91px; flex: none; border-right: 1px solid #d0d0d0; display: flex; flex-direction: column; }
.body { height: 77px; display: flex; }
.foot { height: 16px; line-height: 16px; display: flex; justify-content: center; align-items: center; white-space: nowrap; position: relative; }
.foot:has(svg) { padding-right: 16px; }
.foot svg { position: absolute; right: 3px; top: 5px; }
.g-clip { width: 210px; } .g-font { width: 280px; } .g-align { width: 325px; } .g-num { width: 162px; } .g-style { width: 192px; }
.g-cell { width: 146px; } .g-edit { width: 229px; } .g-addin { width: 58px; } .g-data { width: 61px; } .g-labs { width: 68px; }
.big { display: flex; flex-direction: column; align-items: center; line-height: 15px; padding-top: 1px; flex: 1; }
.big .ico { height: 34px; margin-bottom: 2px; display: flex; align-items: center; }
.big .ico.faint, .g-style .ico { color: #999; }
.big > svg { margin-top: 4px; }
.g-clip .body { padding-left: 9px; }
.w56 { flex: none; width: 56px; }
.list { display: flex; flex-direction: column; gap: 2px; }
.list button { height: 24px; display: flex; align-items: center; gap: 4px; }
.list .gap { margin-left: 6px; }
.rows { display: flex; flex-direction: column; gap: 8px; padding-top: 7px; }
.row { height: 24px; display: flex; align-items: center; }
.body.rows { padding-left: 8px; }
.combo { height: 24px; border: 1px solid #8a8a8a; border-radius: 4px; display: flex; align-items: center; padding: 0 2px; }
.combo input { flex: 1; width: 0; }
.font { width: 170px; margin-right: 2px; }
.size { width: 40px; margin-right: 2px; font-size: 13px; }
.combo.off { width: 146px; background: #f0f0f0; border-color: #dcdcdc; color: #b1b1b1; }
.ctl { display: flex; justify-content: center; align-items: center; }
.ctl svg { align-self: flex-start; margin-top: 2px; }
.w28 { width: 28px; } .w24 { width: 24px; }
.grow { font-size: 16px; } .shrink { font-size: 13px; }
.fmt { display: grid; grid-template-columns: 25px 25px 26px 12px 10px 18px 20px 2px 28px 12px 28px 10px 12px 17px 20px; justify-items: center; }
.fmt button svg, .al button svg, .num button svg { display: block; }
.bold { font-weight: 700; } .ital { font-style: italic; font-family: "Liberation Serif", serif; font-size: 14px; } .under { text-decoration: underline; text-underline-offset: 2px; }
.fcolor { width: 16px; height: 17px; line-height: 13px; font-size: 13px; border-bottom: 4px solid #f00; }
.ruby { font-size: 9px; line-height: 10px; }
.g-align .body { padding-left: 7px; }
.al { display: grid; grid-template-columns: 26px 26px 26px 2px 28px 26px; justify-items: center; width: 138px; }
.al > svg { justify-self: start; }
.on { background: #e8e8e8; }
.al .on { width: 24px; height: 24px; border: 1px solid #666; border-radius: 4px; display: grid; place-items: center; }
.vs.tall { height: 62px; margin: 6px 11px 0 0; }
.wrapcol .row { gap: 3px; }
.wrapcol svg:last-child:not(:first-child) { margin-left: 3px; }
.num { display: grid; grid-template-columns: 24px 14px 30px 22px 7px 26px 24px; justify-items: center; }
.pct { font-size: 18px; color: #999; }
.g-style .body { display: grid; grid-template-columns: 54px 73px 55px; padding-left: 5px; }
.g-cell .body { display: grid; grid-template-columns: 44px 44px 43px; padding-left: 7px; }
.g-edit .body { display: grid; grid-template-columns: 107px 60px 43px; padding-left: 12px; }
.collapse { position: absolute; right: 9px; bottom: 4px; height: 16px; }

/* formula bar */
.formulabar { height: 30px; flex: none; margin: 8px 8px; display: flex; align-items: stretch; }
.namebox, .fxbox, .formula { border: 1px solid #d4d4d4; border-radius: 4px; background: #fff; display: flex; align-items: center; }
.namebox { width: 222px; padding: 2px 4px 0 7px; font: 15px/22px "Noto Sans CJK JP", sans-serif; font-feature-settings: normal; font-weight: 300; }
.namebox input { flex: 1; }
.dots { width: 20px; display: flex; flex-direction: column; align-items: center; justify-content: center; gap: 2px; }
.dots i { width: 2px; height: 2px; background: #333; }
.fxbox { width: 74px; padding: 0 5px 0 6px; justify-content: space-between; margin-right: 4px; }
.fx { font: italic 18px/20px "Liberation Serif", serif; }
.formula { flex: 1; padding: 0 3px; }
.formula input { flex: 1; }

/* sheet */
.workspace { flex: 1; min-height: 0; display: flex; }
.pane { flex: 1; min-width: 0; position: relative; overflow: hidden; border-right: 1px solid #dcdcdc;
  background: repeating-linear-gradient(90deg, transparent 0 71px, #dcdcdc 71px 72px) -1px 0, repeating-linear-gradient(transparent 0 28px, #dcdcdc 28px 29px) 0 24px, #fff; }
.sheet { table-layout: fixed; width: 1943px; border-collapse: separate; border-spacing: 0; font: 14px/20px "Noto Sans CJK JP", sans-serif; font-feature-settings: normal; font-weight: 300; color: #000; }
.sheet col { width: 72px; } .sheet .c-row { width: 34px; } .sheet .c-a { width: 37px; }
.sheet th { background: #f0f0f0; font-weight: inherit; padding: 0; text-align: center; border-bottom: 1px solid #c4c4c4; border-right: 1px solid #999; }
.sheet thead th { height: 24px; line-height: 18px; padding-bottom: 2px; border-bottom-color: #999; border-right-color: #b4b4b4; }
.sheet thead .corner svg { display: block; margin: 2px 0 0 14px; }
.sheet thead .sel { background: #d2d2d2; color: #217346; }
.sheet thead .part { background: linear-gradient(90deg, #d2d2d2 27px, #f0f0f0 27px); }
.sheet tbody tr { height: 29px; }
.sheet td { padding: 0 2px 2px; white-space: nowrap; }
.sheet .title { font-weight: 700; font-size: 15px; padding: 0 3px 3px; background: #fff; }
.d td { background: #fff; border: solid #000; border-width: 0 1px 1px 0; text-align: right; }
.d.p td { padding-right: 3px; }
.d.h td, .d .y { background: #fff2cc; text-align: left; font-size: 15px; }
.d .y.mid { text-align: center; }
.d .g { background: #e2efda; }
.d .pb { border-right-color: transparent; }
.top td { box-shadow: 0 -1px #000; }
.pagebreak { position: absolute; top: 24px; bottom: 0; width: 1px; background: repeating-linear-gradient(#999 0 5px, #fff 5px 8px); }
.pb1 { left: 646px; } .pb2 { left: 1222px; } .pb3 { left: 1798px; }
.textbox { position: absolute; left: 34px; top: 110px; width: 37px; height: 233px; background: #e2efda; display: grid; place-items: center; align-content: center; font: 300 14px/26px "Noto Sans CJK JP", sans-serif; padding-top: 3px; }
.handles { position: absolute; left: 34px; top: 62px; }
.minibar { position: absolute; left: 75px; top: 64px; width: 133px; height: 68px; background: #fff; border: 1px solid #c8c8c8; box-shadow: 1px 1px 3px rgba(0,0,0,.2); display: grid; grid-template-columns: 46px 39px 45px; justify-items: center; padding: 6px 0 0; }
.minibar button { line-height: 15px; display: flex; flex-direction: column; align-items: center; }
.minibar button > span { display: flex; margin: 0 0 1px 8px; }
.minibar span svg:last-child { margin-top: 7px; }
.minibar em { font-style: normal; padding-top: 7px; }
.menu { position: absolute; left: 74px; top: 147px; width: 224px; background: #fff; border: 1px solid #666; padding: 5px 1px 1px; display: flex; flex-direction: column; box-shadow: 2px 2px 4px rgba(0,0,0,.15); }
.menusearch { height: 24px; margin: 0 4px 4px; padding: 0 6px 2px; border: 1px solid #808080; font-size: 12px; }
.menusearch::placeholder { color: #707070; opacity: 1; }
.menu button, .heading { height: 28px; display: grid; grid-template-columns: 25px 1fr auto 22px; align-items: center; text-align: left; padding-left: 12px; white-space: nowrap; }
.menu .heading { height: 30px; font-weight: 700; }
.menu .pasteopt { height: 33px; }
.menu u { text-underline-offset: 2px; }
.menu hr { height: 1px; width: 188px; margin: 1px 0 1px auto; border: 0; background: #d0d0d0; }
.menu .hover { background: #f2f2f2; }
.arr { grid-column: 4; justify-self: start; margin-left: 7px; }
.split { width: 1px; height: 14px; background: #c8c8c8; margin-right: 1px; }
.mark-box { position: absolute; left: 71px; top: 618px; width: 234px; height: 47px; border: 7px solid #f00; border-radius: 8px; box-shadow: 2px 3px 5px rgba(0,0,0,.5), inset 1px 2px 6px rgba(0,0,0,.5); }
.mark { position: absolute; width: 46px; height: 46px; border-radius: 23px; background: #fff; box-shadow: 1px 3px 5px rgba(0,0,0,.55); color: #f00; font: 44px/44px "Noto Sans CJK JP", sans-serif; font-feature-settings: normal; display: flex; justify-content: center; }
.n20 { left: 26px; top: 116px; } .n21 { left: 16px; top: 594px; }
.vscroll { width: 17px; margin: 0 2px -9px; background: #f5f5f5; border-radius: 8px; display: flex; flex-direction: column; align-items: center; padding: 4px 0 10px; z-index: 1; }
.vscroll i { width: 9px; flex: 735; margin-top: 5px; border-radius: 4px; background: #707070; }
.vscroll b { flex: 36; }

/* sheet tabs */
.sheetbar { height: 33px; flex: none; display: flex; align-items: center; border-top: 1px solid #dcdcdc; border-bottom: 1px solid #c6c6c6; padding-bottom: 2px; }
.sheetbar button { display: flex; color: #999; }
.prev { margin-left: 28px; } .next { margin-left: 24px; }
.sheettab { width: 69px; height: 29px; margin: -1px 3px 0 47px; align-self: flex-start; background: #fff; border: 1px solid #dcdcdc; border-top: 0; border-radius: 0 0 5px 5px; padding: 5px 8px 0; font-size: 14px; line-height: 18px; text-align: center; }
.sheettab span { display: block; border-bottom: 2px solid #107c41; }
.sheetbar .vs { height: 18px; }
.add { margin-left: 42px; }
.sheetbar .dots { margin-left: auto; padding-top: 2px; }
.hscroll { width: 729px; height: 17px; margin: 0 19px 0 6px; padding: 0 5px; background: #f5f5f5; border-radius: 8px; display: flex; align-items: center; }
.hscroll i { height: 9px; flex: 667; margin-left: 4px; border-radius: 4px; background: #707070; }
.hscroll b { flex: 33; }

/* status bar */
.status { height: 21px; flex: none; background: #f4f4f4; display: flex; align-items: center; padding: 0 20px 2px 8px; white-space: nowrap; }
.rec { margin-left: 19px; }
.stats { margin-left: auto; display: flex; gap: 19px; }
.views { display: flex; margin-left: 18px; }
.views button { width: 40px; height: 21px; display: grid; place-items: center; }
.views .on { background: #dfdfdf; }
.zoom { display: flex; align-items: center; gap: 4px; margin: 0 14px 0 6px; }
.zoom button { display: flex; }
.zoom input { appearance: none; width: 100px; height: 12px; background: linear-gradient(#666, #666) 0 50% / 100% 1px no-repeat; }
.zoom input::-webkit-slider-thumb { appearance: none; width: 5px; height: 11px; background: #666; }
```
